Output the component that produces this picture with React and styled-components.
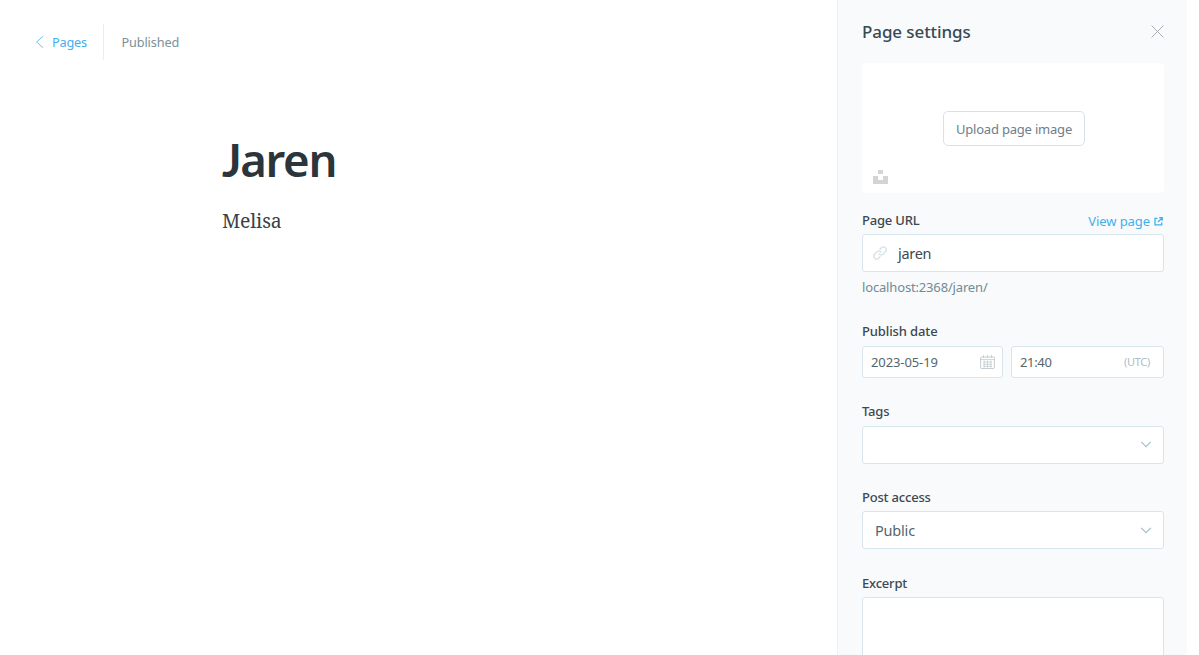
import React from 'react';
import styled, { createGlobalStyle } from 'styled-components';

const Global = createGlobalStyle`
  *, *::before, *::after { box-sizing: border-box; }
  html, body { margin: 0; padding: 0; background: #fff; overflow: hidden; }
  body { font-family: 'Noto Sans', 'Open Sans', sans-serif; color: #394047; }
  svg { display: block; flex: none; }
`;

const Screen = styled.div`
  display: flex;
  width: 1199px;
  height: 655px;
  overflow: hidden;
  background: #fff;
`;

const Label = styled.span`
  display: block;
  white-space: nowrap;
  font-size: ${(p) => p.$size || 13}px;
  line-height: ${(p) => p.$line || 18}px;
  font-weight: ${(p) => p.$weight || 400};
  letter-spacing: ${(p) => p.$track ?? -0.2}px;
  color: ${(p) => p.$color || '#3d484f'};
`;

const Editor = styled.main`
  width: 837px;
  flex: none;
  padding: 24px 0 0 35px;
`;

const TopBar = styled.header`
  display: flex;
  align-items: center;
  height: 36px;
`;

const BackLink = styled.a`
  display: flex;
  align-items: center;
  gap: 8px;
  width: 69px;
  height: 36px;
  border-right: 1px solid #e5eff5;
`;

const Status = styled.div`
  padding-left: 17.5px;
`;

const Document = styled.article`
  padding: 69px 0 0 187px;
`;

const Title = styled.h1`
  margin: 0;
  font-size: 45.5px;
  line-height: 60px;
  font-weight: 600;
  letter-spacing: -1.3px;
  color: #2b353b;

  &::first-letter {
    font-family: Lato, sans-serif;
    font-weight: 700;
  }
`;

const Body = styled.p`
  margin: 16px 0 0;
  font-family: 'Noto Serif', 'Liberation Serif', serif;
  font-size: 19.4px;
  line-height: 30px;
  letter-spacing: -0.15px;
  color: #3a4146;
`;

const Panel = styled.aside`
  width: 350px;
  flex: none;
  padding: 0 23px 0 24px;
  border-left: 1px solid #eaf2f8;
  background: #f8fafc;
`;

const PanelHeader = styled.header`
  display: flex;
  align-items: center;
  justify-content: space-between;
  height: 63px;
`;

const Uploader = styled.section`
  display: flex;
  flex-direction: column;
  align-items: center;
  justify-content: space-between;
  height: 130px;
  padding: 48px 11px 9px;
  border-radius: 4px;
  background: #fff;
`;

const Button = styled.button`
  display: flex;
  align-items: center;
  justify-content: center;
  width: 142px;
  height: 35px;
  margin-left: 2px;
  padding: 0;
  border: 1px solid #d7e2e8;
  border-radius: 5px;
  background: #fff;
  font-family: inherit;
`;

const SourceIcon = styled.span`
  align-self: flex-start;
`;

const Field = styled.section`
  padding-top: ${(p) => p.$top}px;
`;

const FieldHead = styled.div`
  display: flex;
  justify-content: space-between;
  height: ${(p) => p.$height || 24}px;
`;

const ViewLink = styled.a`
  display: flex;
  align-items: center;
  gap: 4px;
  height: 20px;
  padding-right: 1px;
`;

const Input = styled.div`
  display: flex;
  align-items: center;
  justify-content: ${(p) => (p.$split ? 'space-between' : 'flex-start')};
  gap: 11px;
  flex: none;
  width: ${(p) => (p.$width ? p.$width + 'px' : '100%')};
  height: ${(p) => p.$height || 38}px;
  padding: 0 ${(p) => p.$right || 12}px 0 ${(p) => p.$left || 12}px;
  border: 1px solid #d9e5ed;
  border-radius: 3px;
  background: #fff;
`;

const DateRow = styled.div`
  display: flex;
  gap: 8px;
`;

const Help = styled.div`
  padding-top: 6px;
  height: 26px;
`;

const ChevronIcon = styled.svg`
  margin-bottom: ${(p) => (p.$raised ? 1 : 0)}px;
`;

const Chevron = ({ raised }) => (
  <ChevronIcon $raised={raised} width="12" height="7" viewBox="0 0 12 7" fill="none" stroke="#abbdc8" strokeWidth="1.2">
    <path d="M1.2.9 6 5.7 10.8.9" />
  </ChevronIcon>
);

export default function App() {
  return (
    <>
      <Global />
      <Screen>
        <Editor>
          <TopBar>
            <BackLink>
              <svg width="9" height="14" viewBox="0 0 9 14" fill="none" stroke="#5bbdf0" strokeWidth="0.9">
                <path d="M8.2 1.2 1.6 7l6.6 5.8" />
              </svg>
              <Label $size={12.7} $color="#3eb0ef">Pages</Label>
            </BackLink>
            <Status>
              <Label $size={12.7} $track={-0.12} $color="#7c9099">Published</Label>
            </Status>
          </TopBar>
          <Document>
            <Title>Jaren</Title>
            <Body>Melisa</Body>
          </Document>
        </Editor>
        <Panel>
          <PanelHeader>
            <Label $size={17} $line={24} $weight={500} $track={-0.1} $color="#394a52">Page settings</Label>
            <svg width="13" height="14" viewBox="0 0 13 14" fill="none" stroke="#9ba5ab" strokeWidth="0.9">
              <path d="m.6.6 11.8 11.8M12.4.6.6 12.4" />
            </svg>
          </PanelHeader>
          <Uploader>
            <Button><Label $color="#6d8088">Upload page image</Label></Button>
            <SourceIcon>
              <svg width="15" height="14" viewBox="0 0 15 14" fill="#d4d4d4">
                <path d="M5 0h5v4H5zM0 6h5v4h5V6h5v8H0z" />
              </svg>
            </SourceIcon>
          </Uploader>
          <Field $top={18}>
            <FieldHead $height={23}>
              <Label $weight={500}>Page URL</Label>
              <ViewLink>
                <Label $track={-0.08} $color="#3eb0ef">View page</Label>
                <svg width="9" height="9" viewBox="0 0 9 9" fill="none" stroke="#3eb0ef" strokeWidth="1.3">
                  <path d="M3.5 1.3H1v6.5h6.7V5.5M5.2.7h3v3M8 1 4 5" />
                </svg>
              </ViewLink>
            </FieldHead>
            <Input $left={10}>
              <svg width="14" height="14" viewBox="0 0 24 24" fill="none" stroke="#d5e0e7" strokeWidth="2.2" strokeLinecap="round">
                <path d="M10 13.5a5 5 0 0 0 7.3.4l4-4a4.8 4.8 0 0 0-6.8-6.8l-2.6 2.6M14 10.5a5 5 0 0 0-7.3-.4l-4 4a4.8 4.8 0 0 0 6.8 6.8l2.6-2.6" />
              </svg>
              <Label $size={14.5} $track={-0.3}>jaren</Label>
            </Input>
            <Help><Label $track={-0.16} $color="#738a94">localhost:2368/jaren/</Label></Help>
          </Field>
          <Field $top={24}>
            <FieldHead><Label $weight={500} $track={-0.12}>Publish date</Label></FieldHead>
            <DateRow>
              <Input $split $width={141} $height={32} $left={8} $right={7}>
                <Label $track={-0.1} $color="#54666d">2023-05-19</Label>
                <svg width="15" height="14" viewBox="0 0 15 14" fill="none" stroke="#bcc7cd" strokeWidth="0.9">
                  <rect x=".6" y="2" width="13.8" height="11.5" rx="1" />
                  <path d="M.6 4.5h13.8M3 7h9M3 9.3h9M3 11.5h9M4.2 5.5v7M7.5 5.5v7M10.8 5.5v7M3.5 0v3M7.5 0v3M11.5 0v3" strokeWidth=".7" />
                </svg>
              </Input>
              <Input $split $width={153} $height={32} $left={8} $right={13}>
                <Label $track={-0.35} $color="#54666d">21:40</Label>
                <Label $size={11} $track={-0.3} $color="#aebdc5">(UTC)</Label>
              </Input>
            </DateRow>
          </Field>
          <Field $top={24}>
            <FieldHead><Label $weight={500}>Tags</Label></FieldHead>
            <Input $split $right={11}><span /><Chevron raised /></Input>
          </Field>
          <Field $top={24}>
            <FieldHead $height={23}><Label $weight={500}>Post access</Label></FieldHead>
            <Input $split $right={11}><Label $size={14.5} $color="#54666d">Public</Label><Chevron /></Input>
          </Field>
          <Field $top={25}>
            <FieldHead $height={23}><Label $weight={500}>Excerpt</Label></FieldHead>
            <Input $height={90} />
          </Field>
        </Panel>
      </Screen>
    </>
  );
}
